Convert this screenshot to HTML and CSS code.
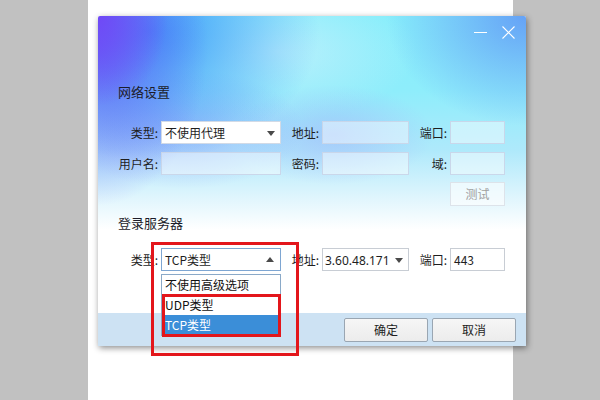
FILE: index.html
```html
<!DOCTYPE html>
<html lang="zh-CN">
<head>
<meta charset="utf-8">
<title>网络设置</title>
<link rel="stylesheet" href="styles.css">
</head>
<body>
<div class="desk">
  <div class="sheet">
    <div class="dialog">
      <div class="bg"></div>
      <div class="titlebar">
        <span class="btn-min"></span>
        <svg class="btn-close" width="13" height="13" viewBox="0 0 13 13"><path d="M0.5 0.5 L12.5 12.5 M12.5 0.5 L0.5 12.5" stroke="#fff" stroke-width="1.1" fill="none"/></svg>
      </div>
      <div class="main">
        <div class="heading h1">网络设置</div>
        <div class="grid">
          <label class="lbl">类型:</label>
          <div class="select white"><span>不使用代理</span><i class="tri down"></i></div>
          <label class="lbl">地址:</label>
          <div class="input glass"></div>
          <label class="lbl">端口:</label>
          <div class="input glass"></div>

          <label class="lbl">用户名:</label>
          <div class="input glass"></div>
          <label class="lbl">密码:</label>
          <div class="input glass"></div>
          <label class="lbl">域:</label>
          <div class="input glass"></div>

          <div class="test">测试</div>
        </div>

        <div class="heading h2">登录服务器</div>
        <div class="grid row3">
          <label class="lbl">类型:</label>
          <div class="select focus">
            <span>TCP类型</span><i class="tri up"></i>
            <ul class="list">
              <li>不使用高级选项</li>
              <li>UDP类型</li>
              <li class="sel">TCP类型</li>
            </ul>
            <div class="mark outer"></div>
            <div class="mark inner"></div>
          </div>
          <label class="lbl">地址:</label>
          <div class="select plain"><span class="ip">3.60.48.171</span><i class="tri down"></i></div>
          <label class="lbl">端口:</label>
          <div class="input plain port"><span>443</span></div>
        </div>
      </div>
      <div class="footer">
        <button class="pbtn">确定</button>
        <button class="pbtn">取消</button>
      </div>
    </div>
  </div>
</div>
</body>
</html>
```

FILE: styles.css
```css
html, body {
  margin: 0;
  padding: 0;
}
body {
  width: 600px;
  height: 400px;
  overflow: hidden;
  background: #c1c1c1;
  font-family: "Noto Sans CJK SC", "Noto Sans", sans-serif;
  font-size: 12px;
  color: #1e1e1e;
}
.desk {
  height: 400px;
  padding-left: 88px;
}
.sheet {
  width: 425px;
  height: 400px;
  background: #ffffff;
  padding: 16px 0 0 10px;
  box-sizing: border-box;
}
.dialog {
  position: relative;
  width: 428px;
  height: 330px;
  display: flex;
  flex-direction: column;
  box-shadow: 1px 2px 6px rgba(0,0,0,0.45);
  border-radius: 2px 2px 0 0;
  background: #fff;
}
.bg {
  position: absolute;
  left: 0; top: 0; right: 0;
  height: 297px;
  border-radius: 2px 2px 0 0;
  background:
    radial-gradient(ellipse 70px 90px at 0% 0%, rgba(112,72,246,1) 0%, rgba(112,72,246,0) 100%),
    radial-gradient(ellipse 110px 160px at 0% 10%, rgba(100,90,246,0.85) 0%, rgba(100,90,246,0) 100%),
    radial-gradient(ellipse 170px 130px at 12% 5%, rgba(56,150,248,0.95) 0%, rgba(56,150,248,0) 100%),
    radial-gradient(ellipse 120px 60px at 20% 38%, rgba(150,150,250,0.55) 0%, rgba(150,150,250,0) 100%),
    radial-gradient(ellipse 100px 50px at 55% 40%, rgba(160,170,250,0.5) 0%, rgba(160,170,250,0) 100%),
    radial-gradient(ellipse 140px 110px at 100% 0%, rgba(100,158,246,0.95) 0%, rgba(100,158,246,0) 100%),
    radial-gradient(ellipse 140px 70px at 42% 12%, rgba(190,240,252,0.9) 0%, rgba(190,240,252,0) 100%),
    linear-gradient(180deg, #86eefb 0%, #8eedfb 25%, #aee9fb 45%, #e2f6fd 62%, #ffffff 72%);
}
.titlebar {
  position: relative;
  height: 40px;
  flex: none;
}
.btn-min {
  position: absolute;
  left: 376px;
  top: 16px;
  width: 13px;
  height: 1px;
  background: #fff;
}
.btn-close {
  position: absolute;
  left: 404px;
  top: 10px;
}
.main {
  position: relative;
  flex: 1;
  padding-left: 20px;
}
.heading {
  font-size: 13px;
  line-height: 18px;
  color: #1c1c2a;
}
.h1 { margin-top: 27px; }
.h2 { margin-top: 8px; }
.grid {
  display: grid;
  grid-template-columns: 40px 120px 35px 87px 35px 55px;
  grid-auto-rows: 23px;
  column-gap: 3px;
  row-gap: 8px;
  margin-top: 20px;
}
.row3 { margin-top: 16px; }
.lbl {
  text-align: right;
  line-height: 23px;
  white-space: nowrap;
  color: #1e1e1e;
}
.input, .select {
  box-sizing: border-box;
  height: 23px;
  line-height: 21px;
  position: relative;
}
.glass {
  border: 1px solid rgba(200,212,232,0.9);
  background: rgba(255,255,255,0.45);
}
.white {
  background: #fff;
  border: 1px solid #d2dae6;
  padding-left: 3px;
}
.plain {
  background: #fff;
  border: 1px solid #c8cdd4;
}
.focus {
  background: #fff;
  border: 1px solid #7ea6d2;
  padding-left: 3px;
}
.select.plain { padding-left: 2px; }
.port { padding-left: 3px; }
.ip { font-family: "Noto Sans", "Noto Sans CJK SC", sans-serif; }
.tri {
  position: absolute;
  right: 5px;
  top: 9px;
  width: 0;
  height: 0;
  border-left: 4.5px solid transparent;
  border-right: 4.5px solid transparent;
}
.tri.down { border-top: 5px solid #4a4a4a; }
.tri.up { border-bottom: 5px solid #4a4a4a; top: 8px; right: 6px; }
.test {
  grid-column: 6;
  grid-row: 3;
  box-sizing: border-box;
  height: 24px;
  margin-top: -1px;
  border: 1px solid #dde3ea;
  background: rgba(255,255,255,0.6);
  color: #a0a0a0;
  text-align: center;
  line-height: 22px;
}
.list {
  position: absolute;
  left: -1px;
  top: 25px;
  width: 120px;
  margin: 0;
  padding: 0;
  list-style: none;
  box-sizing: border-box;
  border: 1px solid #8aa9c8;
  background: #fff;
  z-index: 2;
}
.list li {
  height: 20px;
  line-height: 20px;
  padding-left: 3px;
  color: #111;
}
.list li.sel {
  background: #3b8ed8;
  color: #fff;
}
.mark {
  position: absolute;
  box-sizing: border-box;
  border: 3px solid #e3161b;
  z-index: 3;
  pointer-events: none;
}
.mark.outer {
  left: -11px;
  top: -7px;
  width: 148px;
  height: 114px;
}
.mark.inner {
  left: 0px;
  top: 45px;
  width: 119px;
  height: 43px;
}
.footer {
  position: relative;
  flex: none;
  height: 33px;
  box-sizing: border-box;
  background: #cde2f3;
  display: flex;
  justify-content: flex-end;
  align-items: flex-start;
  gap: 4px;
  padding: 5px 10px 0 0;
}
.pbtn {
  width: 84px;
  height: 24px;
  box-sizing: border-box;
  border: 1px solid #9aa6b2;
  border-radius: 2px;
  background: linear-gradient(#f6f6f6, #ececec);
  font-family: "Noto Sans CJK SC", sans-serif;
  font-size: 12px;
  color: #1e1e1e;
  padding: 0;
  line-height: 22px;
}
```
